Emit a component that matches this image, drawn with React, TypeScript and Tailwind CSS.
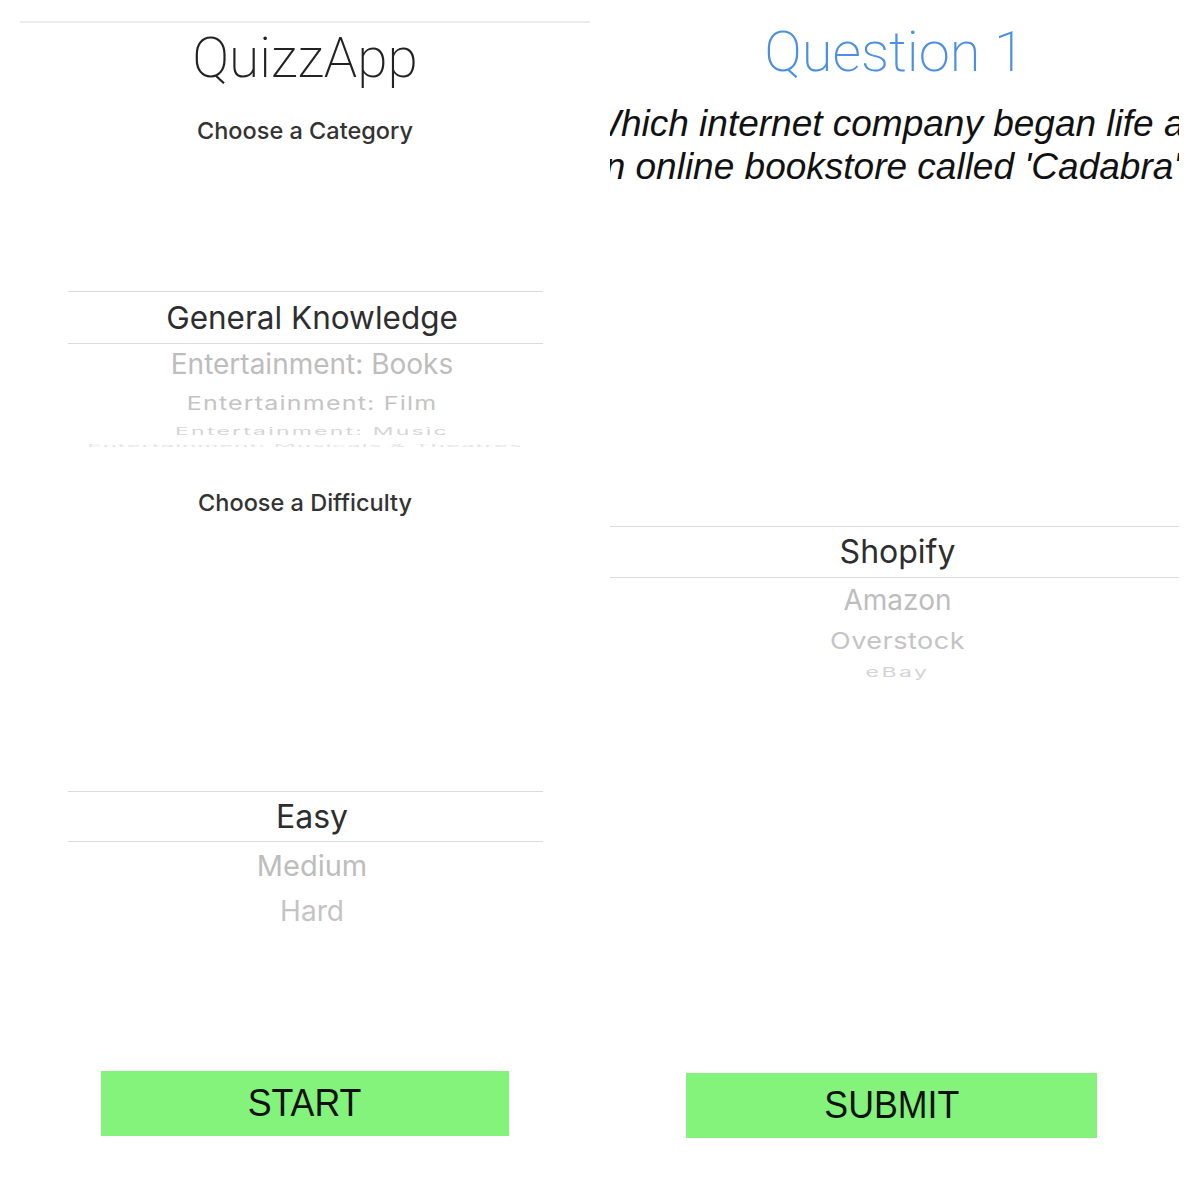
import React from "react";

const roboto = "font-['Roboto',sans-serif]";
const inter = "font-['Inter',sans-serif]";

export default function App() {
  return (
    <div className="w-[1200px] h-[1200px] bg-white flex overflow-hidden">
      {/* Left panel */}
      <div className="ml-[20px] w-[570px] flex flex-col">
        <div className="mt-[21px] h-[2px] w-full bg-[#ececec]" />
        <div className={`mt-[5px] h-[60px] flex items-center justify-center text-[55px] leading-[60px] font-extralight text-[#222] ${roboto}`}>
          QuizzApp
        </div>
        <div className={`mt-[28px] h-[30px] flex items-center justify-center text-[23.5px] leading-[30px] font-medium text-[#333] ${inter}`}>
          Choose a Category
        </div>
        <div className={`mt-[145px] w-[475px] mx-auto flex flex-col ${inter}`}>
          <div className="h-[1px] w-full bg-[#dcdcdc]" />
          <div className="h-[51px] pl-[14px] flex items-center justify-center text-[31.5px] text-[#2e2e2e] whitespace-nowrap">
            General Knowledge
          </div>
          <div className="h-[1px] w-full bg-[#dcdcdc]" />
          <div className="h-[39px] pl-[14px] flex items-center justify-center text-[28px] text-[#bdbdbd] whitespace-nowrap">
            Entertainment: Books
          </div>
          <div className="h-[41px] pl-[14px] flex items-center justify-center text-[25px] text-[#c4c4c4] whitespace-nowrap scale-y-[0.75] tracking-[1.2px]">
            Entertainment: Film
          </div>
          <div className="h-[14px] pl-[14px] flex items-center justify-center text-[23px] text-[#d6d6d6] whitespace-nowrap scale-y-[0.45] tracking-[2.2px]">
            Entertainment: Music
          </div>
          <div className="h-[16px] flex items-center justify-center text-[24px] text-[#e3e3e3] whitespace-nowrap scale-y-[0.15] tracking-[1px] overflow-visible">
            Entertainment: Musicals &amp; Theatres
          </div>
        </div>
        <div className={`mt-[34px] h-[30px] flex items-center justify-center text-[23.5px] leading-[30px] font-medium text-[#333] ${inter}`}>
          Choose a Difficulty
        </div>
        <div className={`mt-[273px] w-[475px] mx-auto flex flex-col ${inter}`}>
          <div className="h-[1px] w-full bg-[#dcdcdc]" />
          <div className="h-[49px] pl-[14px] flex items-center justify-center text-[32px] text-[#2e2e2e]">
            Easy
          </div>
          <div className="h-[1px] w-full bg-[#dcdcdc]" />
          <div className="h-[48px] pl-[14px] flex items-center justify-center text-[29px] text-[#bdbdbd]">
            Medium
          </div>
          <div className="h-[42px] pl-[14px] flex items-center justify-center text-[28px] text-[#c4c4c4]">
            Hard
          </div>
        </div>
        <div className="mt-[139px] mx-auto w-[408px] h-[65px] bg-[#83f37b] flex items-center justify-center">
          <span className="font-['Liberation_Sans',sans-serif] text-[38px] text-[#111] scale-x-[0.94] inline-block">START</span>
        </div>
      </div>

      {/* Right panel */}
      <div className="ml-[20px] w-[569px] flex flex-col overflow-hidden">
        <div className={`mt-[22px] h-[60px] flex items-center justify-center text-[56px] leading-[60px] font-extralight text-[#4b90e2] ${roboto}`}>
          Question 1
        </div>
        <div className="mt-[20px] flex flex-col items-center font-['Liberation_Sans',sans-serif] italic text-[37px] text-[#111]">
          <div className="h-[43px] leading-[43px] whitespace-nowrap">Which internet company began life as</div>
          <div className="h-[43px] leading-[43px] whitespace-nowrap mr-[4px]">an online bookstore called 'Cadabra'?</div>
        </div>
        <div className={`mt-[338px] w-full flex flex-col ${inter}`}>
          <div className="h-[1px] w-full bg-[#dcdcdc]" />
          <div className="h-[50px] pl-[6px] flex items-center justify-center text-[32px] text-[#2e2e2e]">
            Shopify
          </div>
          <div className="h-[1px] w-full bg-[#dcdcdc]" />
          <div className="h-[44px] pl-[6px] flex items-center justify-center text-[28px] text-[#bdbdbd]">
            Amazon
          </div>
          <div className="h-[38px] pl-[6px] flex items-center justify-center text-[27px] text-[#c4c4c4] scale-y-[0.85] tracking-[0.5px]">
            Overstock
          </div>
          <div className="h-[24px] pl-[6px] flex items-center justify-center text-[23px] text-[#d4d4d4] scale-y-[0.6] tracking-[2.5px]">
            eBay
          </div>
        </div>
        <div className="mt-[389px] ml-[76px] w-[411px] h-[65px] bg-[#83f37b] flex items-center justify-center">
          <span className="font-['Liberation_Sans',sans-serif] text-[38px] text-[#111] scale-x-[0.94] inline-block">SUBMIT</span>
        </div>
      </div>
    </div>
  );
}
